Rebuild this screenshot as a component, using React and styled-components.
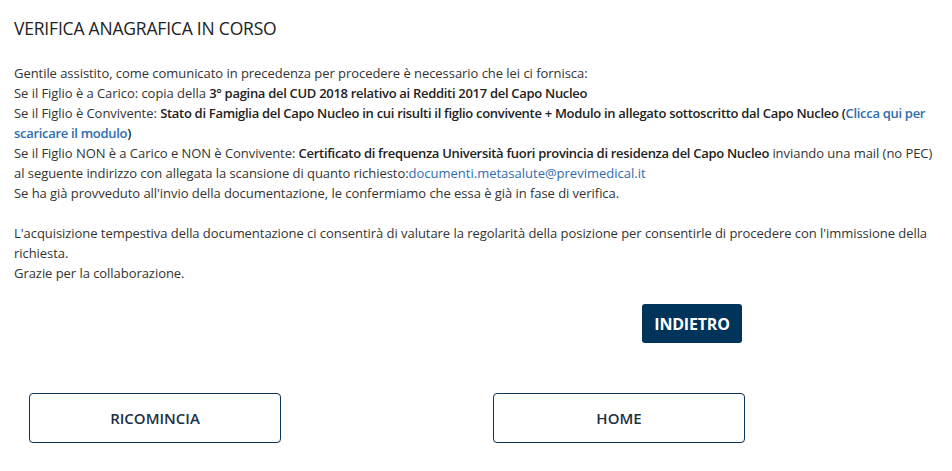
import React from 'react';
import styled, { createGlobalStyle } from 'styled-components';

const GlobalStyle = createGlobalStyle`
	html, body {
		margin: 0;
		padding: 0;
		background: #ffffff;
	}
	body {
		font-family: 'Open Sans', 'Noto Sans', sans-serif;
		color: #333333;
	}
`;

const Page = styled.div`
	width: 952px;
	padding: 15px 8px 0 14px;
	box-sizing: border-box;
`;

const Title = styled.h2`
	margin: 0 0 22px 0;
	font-size: 17.5px;
	font-weight: 500;
	color: #222222;
	line-height: 26px;
	letter-spacing: -0.2px;
`;

const Text = styled.div`
	font-size: 13px;
	line-height: 20px;
	letter-spacing: -0.05px;
	color: #333333;
`;

const Line = styled.div`
	white-space: nowrap;
	margin-top: ${({ $gap }) => ($gap ? '20px' : '0')};
`;

const Strong = styled.b`
	font-weight: 600;
	color: #222222;
	letter-spacing: -0.3px;
`;

const Link = styled.a`
	color: #2e6db0;
	font-weight: ${({ $bold }) => ($bold ? 600 : 400)};
	letter-spacing: ${({ $bold }) => ($bold ? '-0.3px' : '0')};
	text-decoration: none;
`;

const BackRow = styled.div`
	display: flex;
	justify-content: flex-end;
	width: 728px;
	margin-top: 21px;
`;

const BackButton = styled.button`
	width: 100px;
	height: 39px;
	border: none;
	border-radius: 3px;
	background: #00345a;
	color: #ffffff;
	font-family: 'Open Sans', 'Noto Sans', sans-serif;
	font-weight: 700;
	font-size: 16px;
	letter-spacing: -0.2px;
	cursor: pointer;
`;

const ActionRow = styled.div`
	display: flex;
	gap: 212px;
	padding-left: 15px;
	margin-top: 50px;
`;

const OutlineButton = styled.button`
	width: 252px;
	height: 50px;
	border: 1px solid #0b3557;
	border-radius: 4px;
	background: #ffffff;
	color: #1c2f44;
	font-family: 'Open Sans', 'Noto Sans', sans-serif;
	font-weight: 600;
	font-size: 15px;
	box-shadow: 0 2px 2px rgba(0, 0, 0, 0.06);
	cursor: pointer;
`;

export default function App() {
	return (
		<>
			<GlobalStyle />
			<Page>
				<Title>VERIFICA ANAGRAFICA IN CORSO</Title>
				<Text>
					<Line>Gentile assistito, come comunicato in precedenza per procedere è necessario che lei ci fornisca:</Line>
					<Line>
						Se il Figlio è a Carico: copia della <Strong>3° pagina del CUD 2018 relativo ai Redditi 2017 del Capo Nucleo</Strong>
					</Line>
					<Line>
						Se il Figlio è Convivente:{' '}
						<Strong>Stato di Famiglia del Capo Nucleo in cui risulti il figlio convivente + Modulo in allegato sottoscritto dal Capo Nucleo (</Strong>
						<Link $bold href="#">Clicca qui per</Link>
					</Line>
					<Line>
						<Link $bold href="#">scaricare il modulo</Link>
						<Strong>)</Strong>
					</Line>
					<Line>
						Se il Figlio NON è a Carico e NON è Convivente:{' '}
						<Strong>Certificato di frequenza Università fuori provincia di residenza del Capo Nucleo</Strong> inviando una mail (no PEC)
					</Line>
					<Line>
						al seguente indirizzo con allegata la scansione di quanto richiesto:
						<Link href="#">documenti.metasalute@previmedical.it</Link>
					</Line>
					<Line>Se ha già provveduto all'invio della documentazione, le confermiamo che essa è già in fase di verifica.</Line>
					<Line $gap>
						L'acquisizione tempestiva della documentazione ci consentirà di valutare la regolarità della posizione per consentirle di procedere con l'immissione della
					</Line>
					<Line>richiesta.</Line>
					<Line>Grazie per la collaborazione.</Line>
				</Text>
				<BackRow>
					<BackButton>INDIETRO</BackButton>
				</BackRow>
				<ActionRow>
					<OutlineButton>RICOMINCIA</OutlineButton>
					<OutlineButton>HOME</OutlineButton>
				</ActionRow>
			</Page>
		</>
	);
}
